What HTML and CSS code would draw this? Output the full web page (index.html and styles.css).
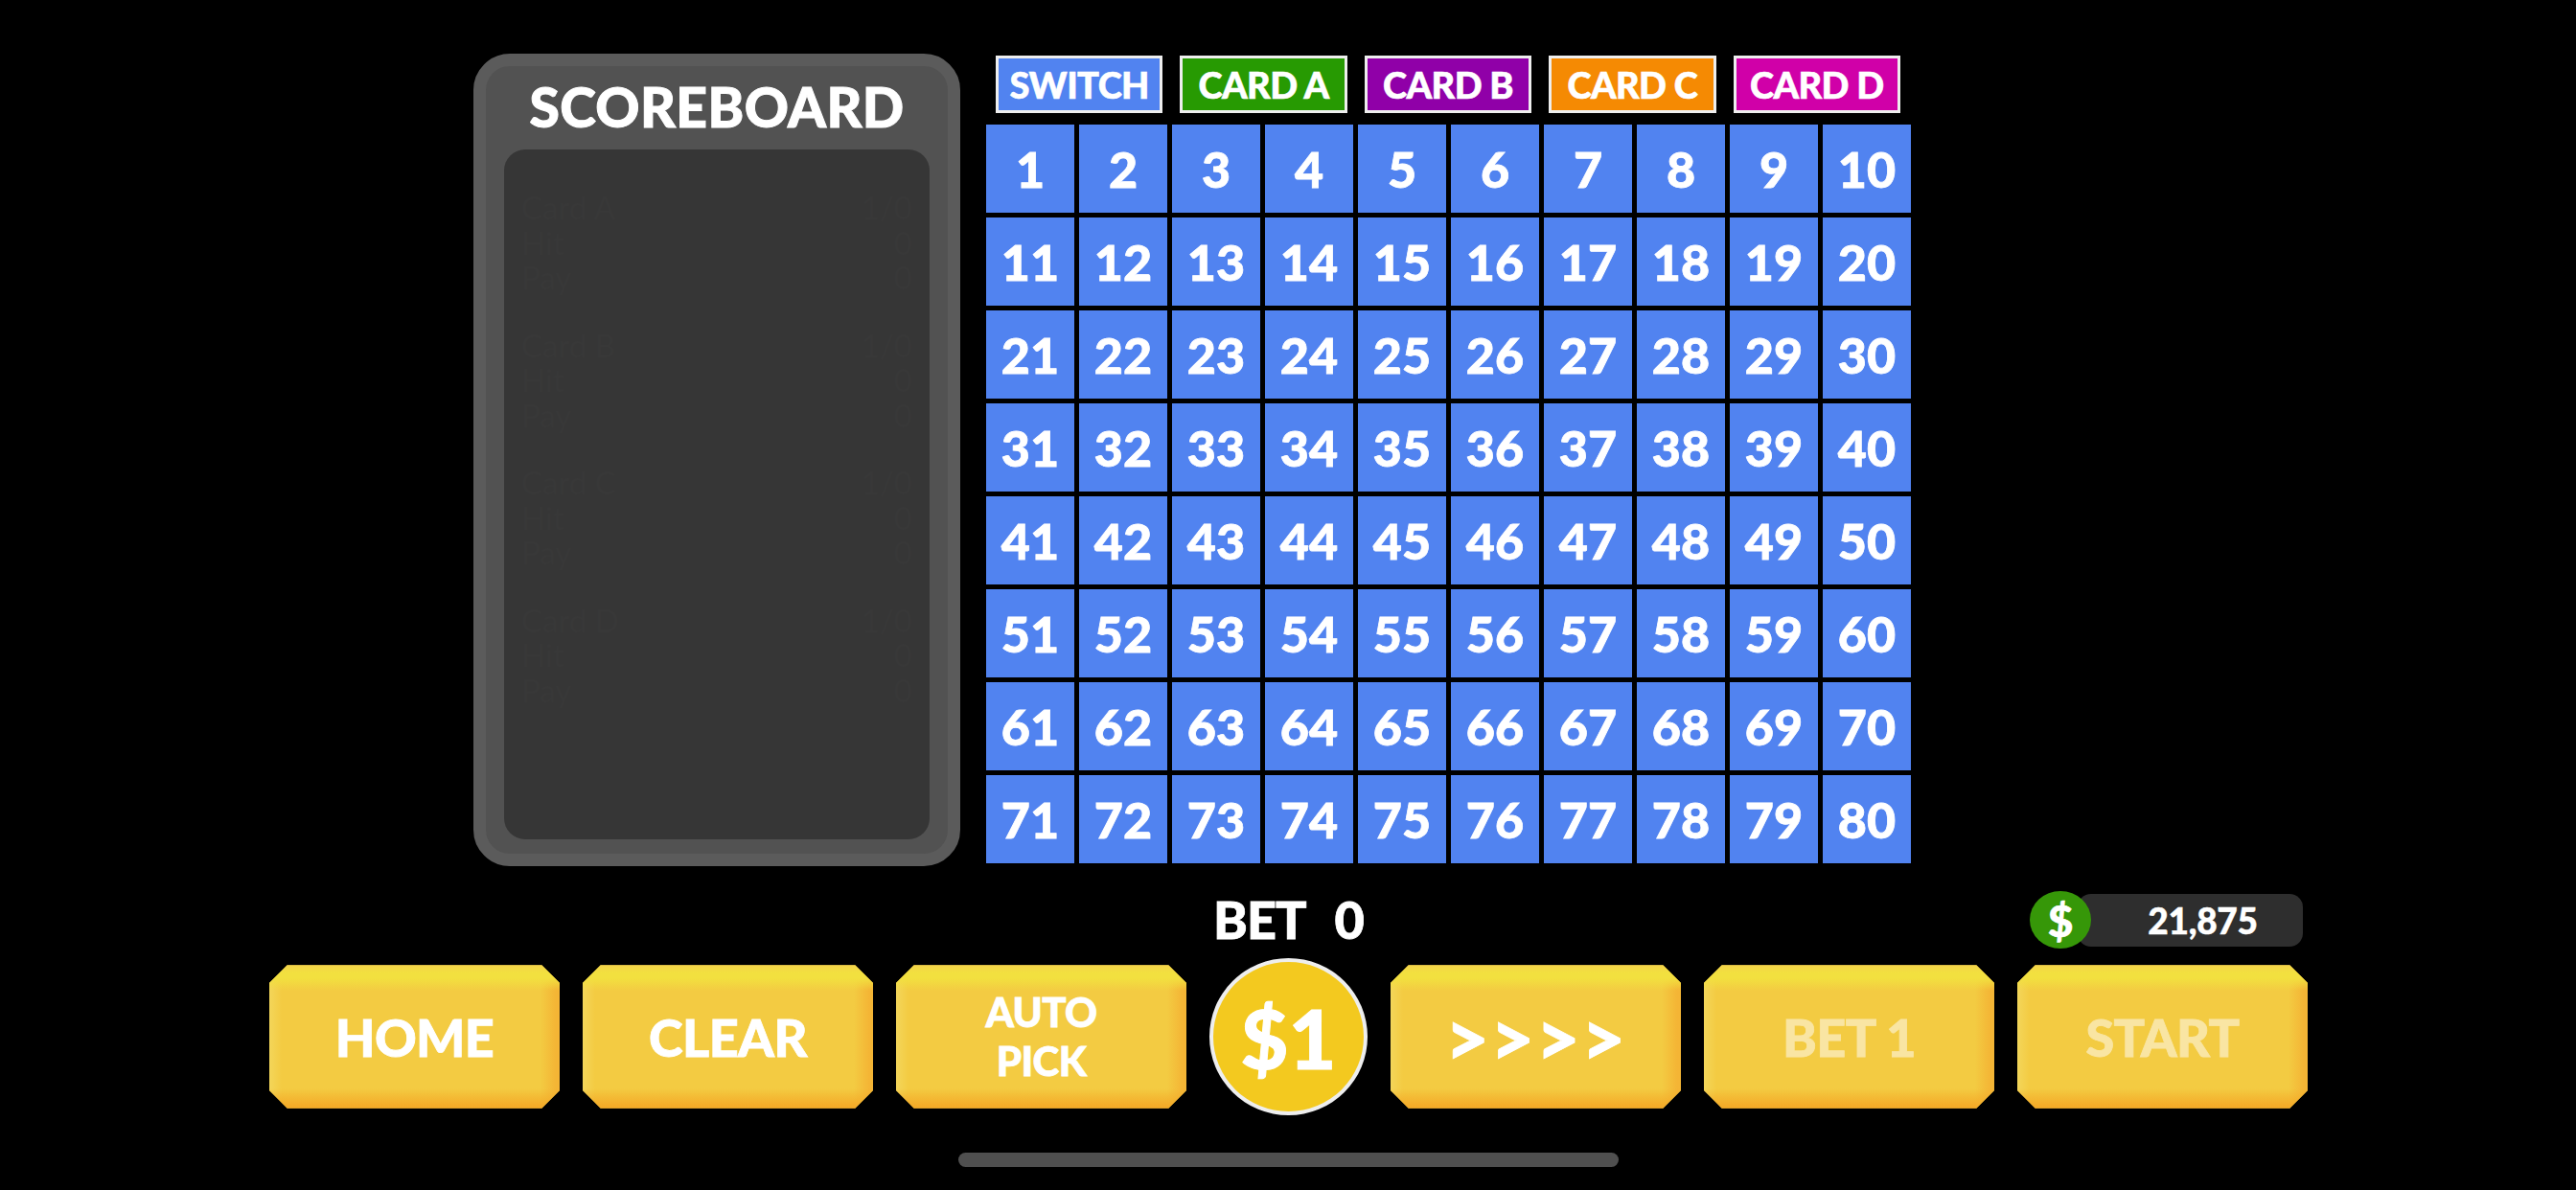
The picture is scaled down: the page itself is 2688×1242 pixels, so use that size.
FILE: index.html
```html
<!DOCTYPE html>
<html lang="en">
<head>
<meta charset="utf-8">
<title>Keno</title>
<link rel="stylesheet" href="styles.css">
</head>
<body>
<main class="stage">
  <section class="top">
    <aside class="panel">
      <h1 class="panel-title">SCOREBOARD</h1>
      <div class="scores">
        <div class="group"><div class="score"><span>Card A</span><span>1/0</span></div><div class="score"><span>Hit</span><span>0</span></div><div class="score"><span>Pay</span><span>0</span></div></div>
        <div class="group"><div class="score"><span>Card B</span><span>1/0</span></div><div class="score"><span>Hit</span><span>0</span></div><div class="score"><span>Pay</span><span>0</span></div></div>
        <div class="group"><div class="score"><span>Card C</span><span>1/0</span></div><div class="score"><span>Hit</span><span>0</span></div><div class="score"><span>Pay</span><span>0</span></div></div>
        <div class="group"><div class="score"><span>Card D</span><span>1/0</span></div><div class="score"><span>Hit</span><span>0</span></div><div class="score"><span>Pay</span><span>0</span></div></div>
      </div>
    </aside>
    <div class="board">
      <div class="tabs">
        <div class="tab tab-switch">SWITCH</div>
        <div class="tab tab-a">CARD A</div>
        <div class="tab tab-b">CARD B</div>
        <div class="tab tab-c">CARD C</div>
        <div class="tab tab-d">CARD D</div>
      </div>
      <div class="grid" id="grid">
        <div class="cell">1</div><div class="cell">2</div><div class="cell">3</div><div class="cell">4</div><div class="cell">5</div><div class="cell">6</div><div class="cell">7</div><div class="cell">8</div><div class="cell">9</div><div class="cell">10</div>
        <div class="cell">11</div><div class="cell">12</div><div class="cell">13</div><div class="cell">14</div><div class="cell">15</div><div class="cell">16</div><div class="cell">17</div><div class="cell">18</div><div class="cell">19</div><div class="cell">20</div>
        <div class="cell">21</div><div class="cell">22</div><div class="cell">23</div><div class="cell">24</div><div class="cell">25</div><div class="cell">26</div><div class="cell">27</div><div class="cell">28</div><div class="cell">29</div><div class="cell">30</div>
        <div class="cell">31</div><div class="cell">32</div><div class="cell">33</div><div class="cell">34</div><div class="cell">35</div><div class="cell">36</div><div class="cell">37</div><div class="cell">38</div><div class="cell">39</div><div class="cell">40</div>
        <div class="cell">41</div><div class="cell">42</div><div class="cell">43</div><div class="cell">44</div><div class="cell">45</div><div class="cell">46</div><div class="cell">47</div><div class="cell">48</div><div class="cell">49</div><div class="cell">50</div>
        <div class="cell">51</div><div class="cell">52</div><div class="cell">53</div><div class="cell">54</div><div class="cell">55</div><div class="cell">56</div><div class="cell">57</div><div class="cell">58</div><div class="cell">59</div><div class="cell">60</div>
        <div class="cell">61</div><div class="cell">62</div><div class="cell">63</div><div class="cell">64</div><div class="cell">65</div><div class="cell">66</div><div class="cell">67</div><div class="cell">68</div><div class="cell">69</div><div class="cell">70</div>
        <div class="cell">71</div><div class="cell">72</div><div class="cell">73</div><div class="cell">74</div><div class="cell">75</div><div class="cell">76</div><div class="cell">77</div><div class="cell">78</div><div class="cell">79</div><div class="cell">80</div>
      </div>
    </div>
  </section>
  <section class="status">
    <div class="bet-total"><span>BET</span><span>0</span></div>
    <div class="balance">
      <span class="balance-icon">$</span>
      <span class="balance-pill">21,875</span>
    </div>
  </section>
  <section class="controls">
    <button class="btn">HOME</button>
    <button class="btn">CLEAR</button>
    <button class="btn btn-two">AUTO<br>PICK</button>
    <button class="coin">$1</button>
    <button class="btn btn-arrows">&gt;&gt;&gt;&gt;</button>
    <button class="btn btn-off">BET 1</button>
    <button class="btn btn-off">START</button>
  </section>
  <div class="home-bar"></div>
</main>
</body>
</html>
```

FILE: styles.css
```css
* { box-sizing: border-box; }

html, body {
  margin: 0;
  height: 100%;
  background: #000;
}

body {
  overflow: hidden;
  color: #fff;
  font-family: Lato, "Liberation Sans", sans-serif;
  font-weight: 900;
}

.stage {
  width: 2688px;
  height: 1242px;
  padding-top: 56px;
}

.top {
  display: flex;
  align-items: flex-start;
  gap: 27px;
  padding-left: 494px;
  height: 848px;
}

.panel {
  width: 508px;
  height: 848px;
  display: flex;
  flex-direction: column;
  padding: 0 32px 28px 32px;
  background: #525252;
  border: 13px solid #5b5b5b;
  border-radius: 38px;
}

.panel-title {
  margin: 0;
  height: 87px;
  font-size: 57px;
  line-height: 84px;
  font-weight: 900;
  letter-spacing: 0.4px;
  -webkit-text-stroke: 1px #fff;
  text-align: center;
  white-space: nowrap;
}

.scores {
  flex: 1;
  display: flex;
  flex-direction: column;
  gap: 34px;
  margin: 0 -13px -13px -13px;
  padding: 42px 18px 0;
  background: #363636;
  border-radius: 22px;
  color: #383838;
  font-size: 33px;
  font-weight: 400;
}

.score {
  display: flex;
  justify-content: space-between;
  line-height: 36.5px;
}

.board {
  width: 965px;
  padding-top: 2px;
}

.tabs {
  display: flex;
  gap: 18px;
  height: 60px;
  margin: 0 11px 12px 10px;
}

.tab {
  width: 174.5px;
  height: 60px;
  display: flex;
  align-items: center;
  justify-content: center;
  border: 3px solid #eeeeee;
  font-size: 38px;
  letter-spacing: -0.6px;
  -webkit-text-stroke: 0.6px #fff;
  white-space: nowrap;
}

.tab-switch { background: #5183f0; }
.tab-a { background: #279a02; }
.tab-b { background: #9000a8; }
.tab-c { background: #f58a03; }
.tab-d { background: #d000a8; }

.grid {
  display: grid;
  grid-template-columns: repeat(10, 92px);
  grid-auto-rows: 92px;
  gap: 5px;
}

.cell {
  display: flex;
  align-items: center;
  justify-content: center;
  background: #5183f0;
  font-size: 52px;
  -webkit-text-stroke: 0.8px #fff;
}

.status {
  display: grid;
  grid-template-columns: 1fr auto 1fr;
  align-items: center;
  width: 2127px;
  height: 60px;
  margin: 24px 0 12px 281px;
}

.bet-total {
  grid-column: 2;
  display: flex;
  gap: 30px;
  font-size: 54px;
  line-height: 64px;
  letter-spacing: -1px;
  -webkit-text-stroke: 0.8px #fff;
}

.balance {
  grid-column: 3;
  justify-self: end;
  display: flex;
  align-items: center;
  margin-right: 5px;
}

.balance-icon {
  position: relative;
  width: 64px;
  height: 60px;
  display: flex;
  align-items: center;
  justify-content: center;
  border-radius: 50%;
  background: #369708;
  font-size: 46px;
  -webkit-text-stroke: 0.6px #fff;
}

.balance-pill {
  width: 235px;
  height: 55px;
  margin-left: -14px;
  padding-left: 26px;
  display: flex;
  align-items: center;
  justify-content: center;
  border-radius: 14px;
  background: #2e2e2e;
  font-size: 37px;
  letter-spacing: -0.3px;
  -webkit-text-stroke: 0.5px #fff;
}

.controls {
  display: flex;
  align-items: center;
  gap: 24px;
  height: 164px;
  padding-left: 281px;
}

.btn {
  width: 303px;
  height: 150px;
  padding: 0;
  border: 0;
  color: #fff;
  font-family: inherit;
  font-weight: 900;
  font-size: 54px;
  letter-spacing: -0.6px;
  line-height: 51px;
  -webkit-text-stroke: 0.8px currentColor;
  background:
    linear-gradient(180deg, #c9ab3c 0, #f3d549 1.5px, #f2e03f 8px, #f2e03f 14px, rgba(243, 203, 66, 0) 27px),
    linear-gradient(0deg, #c9932a 0, #f4ab28 1.5px, #f4ad2a 4px, rgba(244, 173, 42, 0) 21px),
    linear-gradient(270deg, #f4b535 0, #f4b535 4px, rgba(244, 181, 53, 0) 20px),
    linear-gradient(90deg, #f3d65a 0, rgba(243, 214, 90, 0) 13px),
    #f3cb42;
  clip-path: polygon(19px 0, calc(100% - 19px) 0, 100% 19px, 100% calc(100% - 19px), calc(100% - 19px) 100%, 19px 100%, 0 calc(100% - 19px), 0 19px);
}

.btn-two { font-size: 42px; }

.btn-arrows { font-size: 80px; letter-spacing: 1px; }

.btn-off { color: #f9e5a3; }

.coin {
  width: 165px;
  height: 164px;
  padding: 0;
  border: 4px solid #eeeeee;
  border-radius: 50%;
  background: #f3c91f;
  color: #fff;
  font-family: inherit;
  font-weight: 900;
  font-size: 86px;
  -webkit-text-stroke: 1px #fff;
}

.home-bar {
  width: 689px;
  height: 15px;
  margin: 39px auto 0;
  border-radius: 8px;
  background: #4f4f4f;
}
```
